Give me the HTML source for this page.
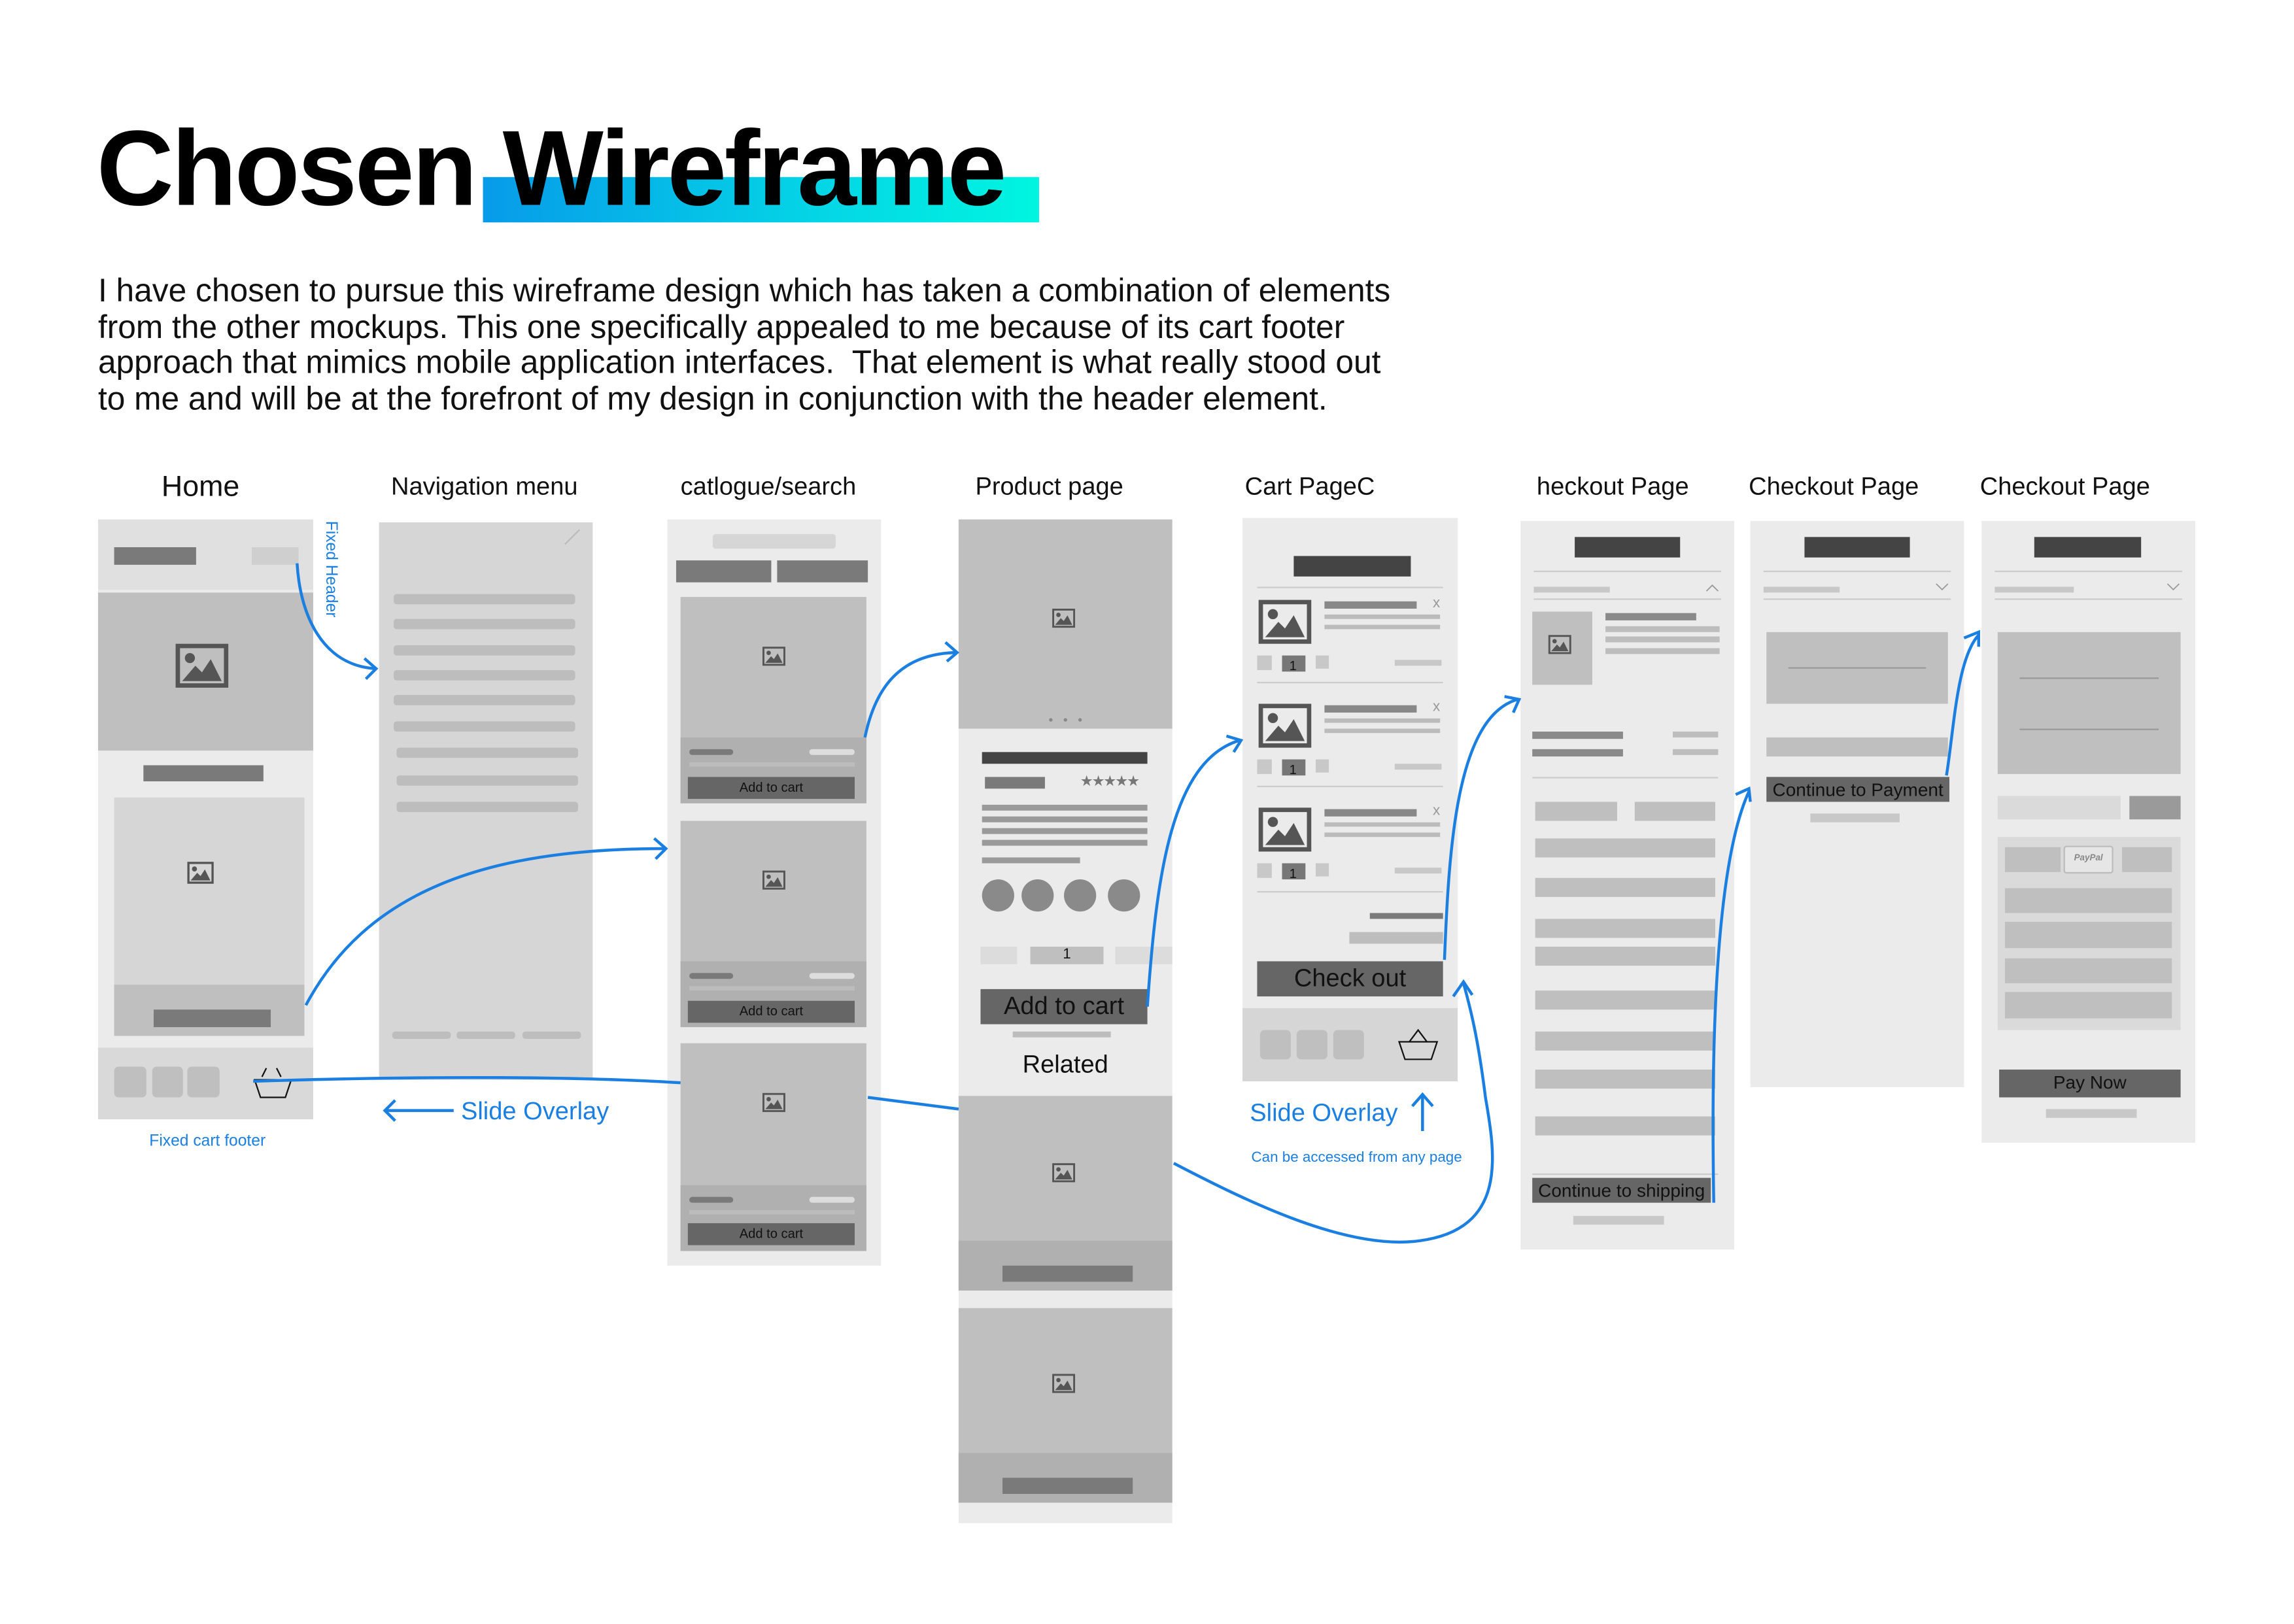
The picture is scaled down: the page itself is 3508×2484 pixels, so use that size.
<!DOCTYPE html>
<html><head><meta charset="utf-8"><style>
html,body{margin:0;padding:0;background:#fff;width:3508px;height:2480px;overflow:hidden}
#r{position:absolute;left:0;top:0;width:1570px;height:1110px;transform:scale(2.238);transform-origin:0 0;font-family:"Liberation Sans",sans-serif}
#r div{position:absolute;box-sizing:border-box}
.h{font-size:17px;color:#111;white-space:nowrap;transform:translateX(-50%)}
.p{background:#ebebeb}.l{background:#d6d6d6}.m{background:#bfbfbf}.k{background:#b0b0b0}.d{background:#7a7a7a}.x{background:#444}.b6{background:#666}
.bt{color:#111;text-align:center;white-space:nowrap;overflow:hidden}
.blue{color:#1a7fe0;white-space:nowrap}
svg{position:absolute;overflow:visible}
</style></head><body><div id="r">

<div style="left:330px;top:121px;width:380px;height:31px;background:linear-gradient(90deg,#079be9,#04d5e6 60%,#00f5e0)"></div>
<div style="left:66px;top:74px;font-size:73px;font-weight:bold;letter-spacing:-1.5px;color:#000;white-space:nowrap">Chosen Wireframe</div>
<div style="left:67px;top:187px;font-size:22.2px;line-height:24.5px;color:#111;white-space:nowrap">I have chosen to pursue this wireframe design which has taken a combination of elements<br>from the other mockups. This one specifically appealed to me because of its cart footer<br>approach that mimics mobile application interfaces.&nbsp; That element is what really stood out<br>to me and will be at the forefront of my design in conjunction with the header element.</div>

<div class="h" style="left:137px;top:322px;font-size:20px">Home</div>
<div class="h" style="left:331px;top:323px">Navigation menu</div>
<div class="h" style="left:525px;top:323px">catlogue/search</div>
<div class="h" style="left:717px;top:323px">Product page</div>
<div class="h" style="left:895px;top:323px">Cart PageC</div>
<div class="h" style="left:1102px;top:323px">heckout Page</div>
<div class="h" style="left:1253px;top:323px">Checkout Page</div>
<div class="h" style="left:1411px;top:323px">Checkout Page</div>

<!-- Home -->
<div class="p" style="left:67px;top:355px;width:147px;height:410px"></div>
<div style="left:67px;top:355px;width:147px;height:48px;background:#e0e0e0"></div>
<div class="d" style="left:78px;top:374px;width:56px;height:12px"></div>
<div style="left:172px;top:374px;width:32px;height:12px;background:#cfcfcf"></div>
<div class="m" style="left:67px;top:405px;width:147px;height:108px"></div>
<div class="d" style="left:98px;top:523px;width:82px;height:11px"></div>
<div class="l" style="left:78px;top:545px;width:130px;height:163px"></div>
<div class="m" style="left:78px;top:673px;width:130px;height:35px"></div>
<div class="d" style="left:105px;top:690px;width:80px;height:12px"></div>
<div style="left:67px;top:716px;width:147px;height:49px;background:#d9d9d9"></div>
<div class="m" style="left:78px;top:729px;width:22px;height:21px;border-radius:3px"></div>
<div class="m" style="left:104px;top:729px;width:21px;height:21px;border-radius:3px"></div>
<div class="m" style="left:128px;top:729px;width:22px;height:21px;border-radius:3px"></div>
<div class="blue" style="left:102px;top:774px;font-size:11px">Fixed cart footer</div>
<div class="blue" style="left:220px;top:356px;font-size:11px;writing-mode:vertical-rl">Fixed Header</div>

<!-- Nav -->
<div class="l" style="left:259px;top:357px;width:146px;height:381px"></div>
<div style="left:269px;top:406px;width:124px;height:7px;background:#bdbdbd;border-radius:2px;box-shadow:0 17px 0 #bdbdbd,0 35px 0 #bdbdbd,0 52px 0 #bdbdbd,0 69px 0 #bdbdbd,0 87px 0 #bdbdbd"></div>
<div style="left:271px;top:511px;width:124px;height:7px;background:#bdbdbd;border-radius:2px;box-shadow:0 19px 0 #bdbdbd,0 37px 0 #bdbdbd"></div>
<div style="left:268px;top:705px;width:40px;height:5px;background:#bdbdbd;border-radius:2px"></div>
<div style="left:312px;top:705px;width:40px;height:5px;background:#bdbdbd;border-radius:2px"></div>
<div style="left:357px;top:705px;width:40px;height:5px;background:#bdbdbd;border-radius:2px"></div>
<div class="blue" style="left:315px;top:750px;font-size:17px">Slide Overlay</div>

<!-- Catalogue -->
<div class="p" style="left:456px;top:355px;width:146px;height:510px"></div>
<div class="l" style="left:487px;top:365px;width:84px;height:10px;border-radius:2px"></div>
<div class="d" style="left:462px;top:383px;width:65px;height:15px"></div>
<div class="d" style="left:531px;top:383px;width:62px;height:15px"></div>

<div class="m" style="left:465px;top:408px;width:127px;height:141px"></div>
<div class="k" style="left:465px;top:504px;width:127px;height:45px"></div>
<div style="left:471px;top:512px;width:30px;height:4px;background:#7a7a7a;border-radius:2px"></div>
<div style="left:553px;top:512px;width:31px;height:4px;background:#ddd;border-radius:2px"></div>
<div style="left:471px;top:521px;width:113px;height:3px;background:#bcbcbc"></div>
<div class="b6 bt" style="left:470px;top:531px;width:114px;height:15px;font-size:9px;line-height:15px">Add to cart</div>

<div class="m" style="left:465px;top:561px;width:127px;height:141px"></div>
<div class="k" style="left:465px;top:657px;width:127px;height:45px"></div>
<div style="left:471px;top:665px;width:30px;height:4px;background:#7a7a7a;border-radius:2px"></div>
<div style="left:553px;top:665px;width:31px;height:4px;background:#ddd;border-radius:2px"></div>
<div style="left:471px;top:674px;width:113px;height:3px;background:#bcbcbc"></div>
<div class="b6 bt" style="left:470px;top:684px;width:114px;height:15px;font-size:9px;line-height:15px">Add to cart</div>

<div class="m" style="left:465px;top:713px;width:127px;height:142px"></div>
<div class="k" style="left:465px;top:810px;width:127px;height:45px"></div>
<div style="left:471px;top:818px;width:30px;height:4px;background:#7a7a7a;border-radius:2px"></div>
<div style="left:553px;top:818px;width:31px;height:4px;background:#ddd;border-radius:2px"></div>
<div style="left:471px;top:827px;width:113px;height:3px;background:#bcbcbc"></div>
<div class="b6 bt" style="left:470px;top:836px;width:114px;height:15px;font-size:9px;line-height:15px">Add to cart</div>

<!-- Product -->
<div class="p" style="left:655px;top:355px;width:146px;height:686px"></div>
<div class="m" style="left:655px;top:355px;width:146px;height:143px"></div>
<div class="x" style="left:671px;top:514px;width:113px;height:8px"></div>
<div class="d" style="left:673px;top:531px;width:41px;height:8px"></div>
<div style="left:738px;top:529px;font-size:10px;color:#777;letter-spacing:-1px">★★★★★</div>
<div style="left:671px;top:550px;width:113px;height:4px;background:#9a9a9a;box-shadow:0 8px 0 #9a9a9a,0 16px 0 #9a9a9a,0 24px 0 #9a9a9a"></div>
<div style="left:671px;top:586px;width:67px;height:4px;background:#9a9a9a"></div>
<div style="left:671px;top:601px;width:22px;height:22px;border-radius:50%;background:#8a8a8a;box-shadow:27px 0 0 #8a8a8a,56px 0 0 #8a8a8a,86px 0 0 #8a8a8a"></div>
<div style="left:670px;top:647px;width:25px;height:12px;background:#dcdcdc"></div>
<div class="m bt" style="left:704px;top:647px;width:50px;height:12px;font-size:10px;line-height:12px">1</div>
<div style="left:762px;top:647px;width:39px;height:12px;background:#dcdcdc"></div>
<div class="b6 bt" style="left:670px;top:676px;width:114px;height:24px;font-size:17px;line-height:24px">Add to cart</div>
<div style="left:692px;top:705px;width:67px;height:4px;background:#bdbdbd"></div>
<div class="bt" style="left:655px;top:718px;width:146px;font-size:17px">Related</div>
<div class="m" style="left:655px;top:749px;width:146px;height:133px"></div>
<div class="k" style="left:655px;top:848px;width:146px;height:34px"></div>
<div class="d" style="left:685px;top:865px;width:89px;height:11px"></div>
<div class="m" style="left:655px;top:894px;width:146px;height:133px"></div>
<div class="k" style="left:655px;top:993px;width:146px;height:34px"></div>
<div class="d" style="left:685px;top:1010px;width:89px;height:11px"></div>

<!-- Cart -->
<div class="p" style="left:849px;top:354px;width:147px;height:385px"></div>
<div class="x" style="left:884px;top:380px;width:80px;height:14px"></div>
<div style="left:859px;top:401px;width:127px;height:1px;background:#ccc;box-shadow:0 65px 0 #ccc,0 136px 0 #ccc,0 208px 0 #ccc"></div>
<div class="l" style="left:849px;top:689px;width:147px;height:50px"></div>
<div class="m" style="left:861px;top:704px;width:21px;height:20px;border-radius:3px"></div>
<div class="m" style="left:886px;top:704px;width:21px;height:20px;border-radius:3px"></div>
<div class="m" style="left:911px;top:704px;width:21px;height:20px;border-radius:3px"></div>
<div style="left:936px;top:624px;width:50px;height:4px;background:#7a7a7a"></div>
<div style="left:922px;top:637px;width:64px;height:8px;background:#bdbdbd"></div>
<div class="b6 bt" style="left:859px;top:657px;width:127px;height:24px;font-size:17px;line-height:24px">Check out</div>
<div class="blue" style="left:854px;top:751px;font-size:17px">Slide Overlay</div>
<div class="blue" style="left:855px;top:786px;font-size:10px">Can be accessed from any page</div>

<!-- heckout -->
<div class="p" style="left:1039px;top:356px;width:146px;height:498px"></div>
<div class="x" style="left:1076px;top:367px;width:72px;height:14px"></div>
<div style="left:1048px;top:390px;width:128px;height:1px;background:#ccc;box-shadow:0 19px 0 #ccc"></div>
<div style="left:1048px;top:401px;width:52px;height:4px;background:#c8c8c8"></div>
<div class="m" style="left:1047px;top:418px;width:41px;height:50px"></div>
<div style="left:1097px;top:419px;width:62px;height:5px;background:#8a8a8a"></div>
<div style="left:1097px;top:428px;width:78px;height:4px;background:#bdbdbd;box-shadow:0 7px 0 #bdbdbd,0 15px 0 #bdbdbd"></div>
<div style="left:1047px;top:500px;width:62px;height:5px;background:#8a8a8a;box-shadow:0 12px 0 #8a8a8a"></div>
<div style="left:1143px;top:500px;width:31px;height:4px;background:#bdbdbd;box-shadow:0 12px 0 #bdbdbd"></div>
<div style="left:1047px;top:531px;width:127px;height:1px;background:#ccc;box-shadow:0 271px 0 #ccc"></div>
<div class="m" style="left:1049px;top:548px;width:56px;height:13px"></div>
<div class="m" style="left:1117px;top:548px;width:55px;height:13px"></div>
<div class="m" style="left:1049px;top:573px;width:123px;height:13px"></div>
<div class="m" style="left:1049px;top:600px;width:123px;height:13px"></div>
<div class="m" style="left:1049px;top:628px;width:123px;height:13px"></div>
<div class="m" style="left:1049px;top:647px;width:123px;height:13px"></div>
<div class="m" style="left:1049px;top:677px;width:123px;height:13px"></div>
<div class="m" style="left:1049px;top:705px;width:123px;height:13px"></div>
<div class="m" style="left:1049px;top:731px;width:123px;height:13px"></div>
<div class="m" style="left:1049px;top:763px;width:123px;height:13px"></div>
<div class="b6 bt" style="left:1047px;top:805px;width:122px;height:17px;font-size:12.5px;line-height:18px">Continue to shipping</div>
<div style="left:1075px;top:831px;width:62px;height:6px;background:#c8c8c8"></div>

<!-- Checkout 2 -->
<div class="p" style="left:1196px;top:356px;width:146px;height:387px"></div>
<div class="x" style="left:1233px;top:367px;width:72px;height:14px"></div>
<div style="left:1205px;top:390px;width:128px;height:1px;background:#ccc;box-shadow:0 19px 0 #ccc"></div>
<div style="left:1205px;top:401px;width:52px;height:4px;background:#c8c8c8"></div>
<div class="m" style="left:1207px;top:432px;width:124px;height:49px"></div>
<div style="left:1222px;top:456px;width:94px;height:1px;background:#999"></div>
<div class="m" style="left:1207px;top:504px;width:124px;height:13px"></div>
<div class="b6 bt" style="left:1207px;top:531px;width:125px;height:17px;font-size:12.5px;line-height:18px">Continue to Payment</div>
<div style="left:1237px;top:556px;width:61px;height:6px;background:#c8c8c8"></div>

<!-- Checkout 3 -->
<div class="p" style="left:1354px;top:356px;width:146px;height:425px"></div>
<div class="x" style="left:1390px;top:367px;width:73px;height:14px"></div>
<div style="left:1363px;top:390px;width:128px;height:1px;background:#ccc;box-shadow:0 19px 0 #ccc"></div>
<div style="left:1363px;top:401px;width:54px;height:4px;background:#c8c8c8"></div>
<div class="m" style="left:1365px;top:432px;width:125px;height:97px"></div>
<div style="left:1380px;top:463px;width:95px;height:1px;background:#999;box-shadow:0 35px 0 #999"></div>
<div style="left:1365px;top:544px;width:84px;height:16px;background:#dadada"></div>
<div style="left:1455px;top:544px;width:35px;height:16px;background:#9a9a9a"></div>
<div style="left:1365px;top:572px;width:125px;height:132px;background:#dadada"></div>
<div class="m" style="left:1370px;top:579px;width:38px;height:17px"></div>
<div style="left:1410px;top:578px;width:34px;height:19px;background:#e6e6e6;border:1px solid #bbb;border-radius:2px;font-size:6px;font-style:italic;font-weight:bold;color:#888;text-align:center;line-height:17px">PayPal</div>
<div class="m" style="left:1450px;top:579px;width:34px;height:17px"></div>
<div class="m" style="left:1370px;top:607px;width:114px;height:17px"></div>
<div class="m" style="left:1370px;top:630px;width:114px;height:18px"></div>
<div class="m" style="left:1370px;top:655px;width:114px;height:17px"></div>
<div class="m" style="left:1370px;top:678px;width:114px;height:18px"></div>
<div class="b6 bt" style="left:1366px;top:731px;width:124px;height:19px;font-size:12.5px;line-height:19px">Pay Now</div>
<div style="left:1398px;top:758px;width:62px;height:6px;background:#c8c8c8"></div>

<svg width="1560" height="1103" style="left:0;top:0">
<defs>
<g id="ic"><rect x="1" y="1" width="22" height="18" fill="none" stroke="#555" stroke-width="2"/><circle cx="6.5" cy="6.5" r="2.3" fill="#555"/><path d="M3 17 L9 10 L12 13 L16 7 L21 17Z" fill="#555"/></g>
</defs>
<use href="#ic" transform="translate(120,440) scale(1.5)"/>
<use href="#ic" transform="translate(128,589) scale(0.75)"/>
<use href="#ic" transform="translate(521,442) scale(0.65)"/>
<use href="#ic" transform="translate(521,595) scale(0.65)"/>
<use href="#ic" transform="translate(521,747) scale(0.65)"/>
<use href="#ic" transform="translate(719,416) scale(0.65)"/>
<use href="#ic" transform="translate(719,795) scale(0.65)"/>
<use href="#ic" transform="translate(719,939) scale(0.65)"/>
<use href="#ic" transform="translate(1058,434) scale(0.65)"/>
<use href="#ic" transform="translate(860,410) scale(1.5)"/>
<use href="#ic" transform="translate(860,481) scale(1.5)"/>
<use href="#ic" transform="translate(860,552) scale(1.5)"/>
<g fill="#888"><circle cx="718" cy="492" r="1.2"/><circle cx="728" cy="492" r="1.2"/><circle cx="738" cy="492" r="1.2"/></g>
<path d="M386 372 L396 362" stroke="#bbb" stroke-width="1"/>
<g>
<rect x="905" y="411" width="63" height="5" fill="#888"/><rect x="905" y="420" width="79" height="3" fill="#bbb"/><rect x="905" y="427" width="79" height="3" fill="#bbb"/>
<rect x="859" y="448" width="10" height="10" fill="#c8c8c8"/><rect x="876" y="448" width="16" height="11" fill="#777"/><text x="881" y="458" font-size="9" font-family="Liberation Sans" fill="#111">1</text><rect x="899" y="448" width="9" height="9" fill="#c8c8c8"/><rect x="953" y="451" width="32" height="4" fill="#c8c8c8"/>
<text x="979" y="415" font-size="10" fill="#999" font-family="Liberation Sans">x</text>
</g>
<g transform="translate(0,71)">
<rect x="905" y="411" width="63" height="5" fill="#888"/><rect x="905" y="420" width="79" height="3" fill="#bbb"/><rect x="905" y="427" width="79" height="3" fill="#bbb"/>
<rect x="859" y="448" width="10" height="10" fill="#c8c8c8"/><rect x="876" y="448" width="16" height="11" fill="#777"/><text x="881" y="458" font-size="9" font-family="Liberation Sans" fill="#111">1</text><rect x="899" y="448" width="9" height="9" fill="#c8c8c8"/><rect x="953" y="451" width="32" height="4" fill="#c8c8c8"/>
<text x="979" y="415" font-size="10" fill="#999" font-family="Liberation Sans">x</text>
</g>
<g transform="translate(0,142)">
<rect x="905" y="411" width="63" height="5" fill="#888"/><rect x="905" y="420" width="79" height="3" fill="#bbb"/><rect x="905" y="427" width="79" height="3" fill="#bbb"/>
<rect x="859" y="448" width="10" height="10" fill="#c8c8c8"/><rect x="876" y="448" width="16" height="11" fill="#777"/><text x="881" y="458" font-size="9" font-family="Liberation Sans" fill="#111">1</text><rect x="899" y="448" width="9" height="9" fill="#c8c8c8"/><rect x="953" y="451" width="32" height="4" fill="#c8c8c8"/>
<text x="979" y="415" font-size="10" fill="#999" font-family="Liberation Sans">x</text>
</g>
<g fill="none" stroke="#999" stroke-width="0.8">
<path d="M1166 404 L1170 400 L1174 404"/><path d="M1323 399 L1327 403 L1331 399"/><path d="M1481 399 L1485 403 L1489 399"/>
</g>
<g fill="none" stroke="#111" stroke-width="1">
<path d="M174 738 L199 738 L195 750 L178 750 Z"/><path d="M179 736 L182 730 M192 736 L189 730"/>
<path d="M956 712 L982 712 L978 724 L960 724 Z"/><path d="M963 712 L969 704 L975 712"/>
</g>
<g fill="none" stroke="#1a7fe0" stroke-width="2">
<path d="M203 385 C205 420 220 455 257 457"/><path d="M249 450 L257 457 L250 464"/>
<path d="M209 687 C250 610 330 580 454 580"/><path d="M447 573 L455 580 L448 587"/>
<path d="M173 739 C300 735 400 736 465 740"/>
<path d="M593 750 L655 758"/>
<path d="M591 504 C598 470 615 447 653 446"/><path d="M646 439 L654 446 L647 452"/>
<path d="M263 759 L310 759"/><path d="M270 752 L263 759 L270 766"/>
<path d="M784 688 C790 600 800 520 847 506"/><path d="M838 503 L848 506 L843 514"/>
<path d="M987 656 C990 580 995 490 1037 478"/><path d="M1028 476 L1038 478 L1034 487"/>
<path d="M802 795 C850 820 920 855 970 848 C1030 840 1022 790 1015 750 C1010 710 1005 690 1000 672"/><path d="M993 681 L1000 671 L1006 680"/>
<path d="M1171 822 C1170 760 1168 600 1195 541"/><path d="M1186 543 L1195 539 L1196 548"/>
<path d="M1330 530 C1335 500 1337 450 1352 434"/><path d="M1342 436 L1352 432 L1352 442"/>
<path d="M972 773 L972 748"/><path d="M965 756 L972 748 L979 756"/>
</g>
</svg>
</div></body></html>
